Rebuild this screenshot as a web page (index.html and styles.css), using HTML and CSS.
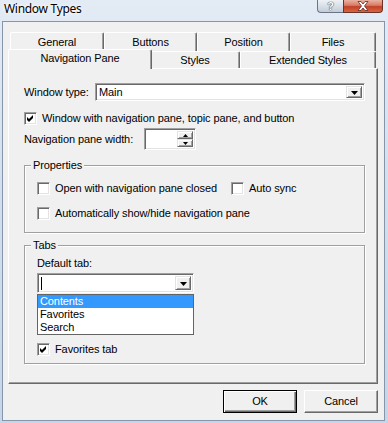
FILE: index.html
```html
<!DOCTYPE html>
<html>
<head>
<meta charset="utf-8">
<link rel="stylesheet" href="styles.css">
</head>
<body>
<div class="window">
  <div class="titlebar">
    <span class="title">Window Types</span>
    <div class="caption">
      <div class="cbtn help">?</div>
      <div class="cbtn close">
        <svg width="14" height="10" viewBox="0 0 14 10"><path d="M2 0.5h3l2 2.5 2-2.5h3l-3.5 4.5 3.5 4.5h-3l-2-2.5-2 2.5h-3l3.5-4.5z" fill="#fff" stroke="#5a2a22" stroke-width="0.8"/></svg>
      </div>
    </div>
  </div>
  <div class="client">
    <div class="tabrow back">
      <div class="tab t-general">General</div>
      <div class="tab t-buttons">Buttons</div>
      <div class="tab t-position">Position</div>
      <div class="tab t-files">Files</div>
    </div>
    <div class="tabrow front">
      <div class="tab t-nav selected">Navigation Pane</div>
      <div class="tab t-styles">Styles</div>
      <div class="tab t-ext">Extended Styles</div>
    </div>
    <div class="panel">
      <div class="row">
        <span class="lbl lbl-wt">Window type:</span>
        <div class="combo combo-wt">
          <span class="combo-text">Main</span>
          <div class="drop-btn"><svg width="7" height="4" viewBox="0 0 7 4"><path d="M0 0h7l-3.5 4z" fill="#000"/></svg></div>
        </div>
      </div>
      <div class="row check-row first-check">
        <span class="cb"><svg width="9" height="9" viewBox="0 0 9 9"><path d="M1 3L3 5L7 1V4L3 8L1 6Z" fill="#000"/></svg></span>
        <span>Window with navigation pane, topic pane, and button</span>
      </div>
      <div class="row width-row">
        <span class="lbl lbl-nw">Navigation pane width:</span>
        <div class="spinner">
          <div class="spin-edit"></div>
          <div class="spin-btns">
            <div class="spin-btn"><svg width="5" height="3" viewBox="0 0 5 3"><path d="M0 3h5L2.5 0z" fill="#000"/></svg></div>
            <div class="spin-btn"><svg width="5" height="3" viewBox="0 0 5 3"><path d="M0 0h5L2.5 3z" fill="#000"/></svg></div>
          </div>
        </div>
      </div>
      <div class="group group-props">
        <div class="group-label">Properties</div>
        <div class="row check-row prop-row1">
          <div class="check-item item-open">
            <span class="cb"></span>
            <span>Open with navigation pane closed</span>
          </div>
          <div class="check-item">
            <span class="cb"></span>
            <span>Auto sync</span>
          </div>
        </div>
        <div class="row check-row prop-row2">
          <span class="cb"></span>
          <span>Automatically show/hide navigation pane</span>
        </div>
      </div>
      <div class="group group-tabs">
        <div class="group-label">Tabs</div>
        <div class="deflabel">Default tab:</div>
        <div class="combo combo-tab">
          <span class="caret"></span>
          <div class="drop-btn"><svg width="7" height="4" viewBox="0 0 7 4"><path d="M0 0h7l-3.5 4z" fill="#000"/></svg></div>
        </div>
        <div class="droplist">
          <div class="item sel">Contents</div>
          <div class="item">Favorites</div>
          <div class="item">Search</div>
        </div>
        <div class="row check-row fav-row">
          <span class="cb"><svg width="9" height="9" viewBox="0 0 9 9"><path d="M1 3L3 5L7 1V4L3 8L1 6Z" fill="#000"/></svg></span>
          <span>Favorites tab</span>
        </div>
      </div>
    </div>
    <div class="footer">
      <div class="btn default">OK</div>
      <div class="btn">Cancel</div>
    </div>
  </div>
</div>
</body>
</html>
```

FILE: styles.css
```css
* { box-sizing: border-box; }
html, body { margin: 0; padding: 0; }
body {
  width: 388px;
  height: 423px;
  overflow: hidden;
  font-family: "Liberation Sans", Arial, sans-serif;
  font-size: 11px;
  line-height: 13px;
  letter-spacing: -0.1px;
  color: #000;
}
.window {
  width: 388px;
  height: 423px;
  background: linear-gradient(180deg, #e3ebf5 0%, #d3dfee 45%, #c6d5e8 100%);
  padding: 0 3px 2px 2px;
  display: flex;
  flex-direction: column;
}
.titlebar {
  height: 21px;
  flex: none;
  display: flex;
  align-items: flex-start;
}
.title {
  font-family: "Noto Sans", "Open Sans", sans-serif;
  font-size: 12px;
  letter-spacing: -0.3px;
  line-height: 16px;
  margin: 1px 0 0 2px;
  text-shadow: 0 0 5px #fff, 0 0 3px #fff;
}
.caption {
  margin-left: auto;
  margin-right: 2px;
  display: flex;
}
.cbtn {
  height: 13px;
  display: flex;
  align-items: center;
  justify-content: center;
  border: 1px solid #6a7688;
  border-top: none;
}
.help {
  width: 26px;
  border-radius: 0 0 0 4px;
  border-right: none;
  background: linear-gradient(180deg, #eef2f7 0%, #d8dfe8 50%, #c3ccd8 100%);
  color: #fff;
  font-weight: bold;
  font-size: 11px;
  text-shadow: 0 0 1px #2a3342, 0 0 1px #2a3342;
}
.close {
  width: 40px;
  border-radius: 0 0 4px 0;
  border-color: #6b3328;
  background: linear-gradient(180deg, #eab2a2 0%, #d77a63 45%, #c2412a 55%, #d8653f 100%);
}
.client {
  flex: 1;
  background: #f0f0f0;
  border: 1px solid #8596ab;
  display: flex;
  flex-direction: column;
}
.tabrow {
  display: flex;
  margin-left: 7px;
}
.tabrow.back {
  height: 19px;
  margin-top: 10px;
}
.tabrow.front {
  height: 17px;
  align-items: flex-end;
  position: relative;
  z-index: 2;
}
.tab {
  display: flex;
  align-items: center;
  justify-content: center;
  background: #f0f0f0;
  border-top: 1px solid #fff;
  border-left: 1px solid #fff;
  border-right: 1px solid #696969;
  box-shadow: inset -1px 0 0 #a0a0a0;
  border-radius: 2px 2px 0 0;
  white-space: nowrap;
}
.back .tab { height: 19px; }
.front .tab { height: 17px; }
.t-general { width: 94px; }
.t-buttons { width: 93px; }
.t-position { width: 93px; }
.t-files { width: 86px; }
.t-styles { width: 90px; }
.t-ext { width: 136px; }
.front .tab.t-nav {
  width: 144px;
  height: 20px;
  margin: 0 -2px -1px -2px;
  padding-bottom: 3px;
  position: relative;
  z-index: 3;
}
.panel {
  margin-left: 5px;
  width: 370px;
  height: 316px;
  flex: none;
  border-top: 1px solid #fff;
  border-left: 1px solid #fff;
  border-right: 1px solid #696969;
  border-bottom: 1px solid #696969;
  box-shadow: inset -1px -1px 0 #a0a0a0;
  padding: 14px 0 0 15px;
}
.row {
  display: flex;
  align-items: center;
}
.lbl-wt { width: 71px; }
.lbl-nw { width: 120px; }
.combo, .cb, .spinner {
  background: #fff;
  border: 1px solid;
  border-color: #a0a0a0 #fff #fff #a0a0a0;
  box-shadow: inset 1px 1px 0 #696969, inset -1px -1px 0 #e3e3e3;
}
.combo {
  display: flex;
  align-items: center;
  padding: 2px;
}
.combo-wt {
  width: 270px;
  height: 18px;
}
.combo-text {
  flex: 1;
  padding-left: 1px;
}
.drop-btn, .spin-btn {
  background: #f0f0f0;
  border: 1px solid;
  border-color: #e3e3e3 #696969 #696969 #e3e3e3;
  box-shadow: inset 1px 1px 0 #fff, inset -1px -1px 0 #a0a0a0;
  display: flex;
  align-items: center;
  justify-content: center;
}
.drop-btn {
  width: 16px;
  height: 100%;
  margin-left: auto;
}
.drop-btn svg { margin-top: 1px; }
.cb {
  width: 13px;
  height: 13px;
  flex: none;
  display: flex;
  align-items: center;
  justify-content: center;
  margin-right: 5px;
}
.check-row { height: 13px; }
.first-check { margin-top: 11px; }
.width-row { margin-top: 3px; }
.spinner {
  width: 52px;
  height: 22px;
  display: flex;
  padding: 2px;
}
.spin-edit { flex: 1; }
.spin-btns {
  width: 16px;
  display: flex;
  flex-direction: column;
}
.spin-btn { flex: 1; }
.group {
  width: 341px;
  border: 1px solid #a0a0a0;
  box-shadow: inset 1px 1px 0 #fff, 1px 1px 0 #fff;
  padding: 0 0 12px 12px;
}
.group-props { margin-top: 15px; }
.group-tabs { margin-top: 12px; padding-bottom: 7px; }
.group-label {
  width: fit-content;
  margin: -7px 0 0 -6px;
  padding: 0 2px;
  background: #f0f0f0;
}
.prop-row1 { margin-top: 10px; }
.prop-row2 { margin-top: 12px; }
.check-item {
  display: flex;
  align-items: center;
}
.item-open { width: 194px; }
.deflabel { margin-top: 5px; }
.combo-tab {
  width: 157px;
  height: 20px;
  margin-top: 3px;
}
.caret {
  width: 1px;
  height: 13px;
  background: #000;
  margin-left: 1px;
}
.droplist {
  width: 157px;
  margin-top: 1px;
  border: 1px solid #646464;
  background: #fff;
}
.item {
  height: 13px;
  padding-left: 2px;
}
.item.sel {
  background: #3399ff;
  color: #fff;
}
.fav-row { margin-top: 8px; }
.footer {
  display: flex;
  justify-content: flex-end;
  gap: 7px;
  margin-top: 6px;
  padding-right: 6px;
}
.btn {
  width: 74px;
  height: 23px;
  display: flex;
  align-items: center;
  justify-content: center;
  background: #f0f0f0;
  border: 1px solid;
  border-color: #fff #696969 #696969 #fff;
  box-shadow: inset -1px -1px 0 #a0a0a0;
}
.btn.default {
  border: 1px solid #000;
  box-shadow: inset 1px 1px 0 #fff, inset -1px -1px 0 #696969, inset -2px -2px 0 #a0a0a0;
}
```
